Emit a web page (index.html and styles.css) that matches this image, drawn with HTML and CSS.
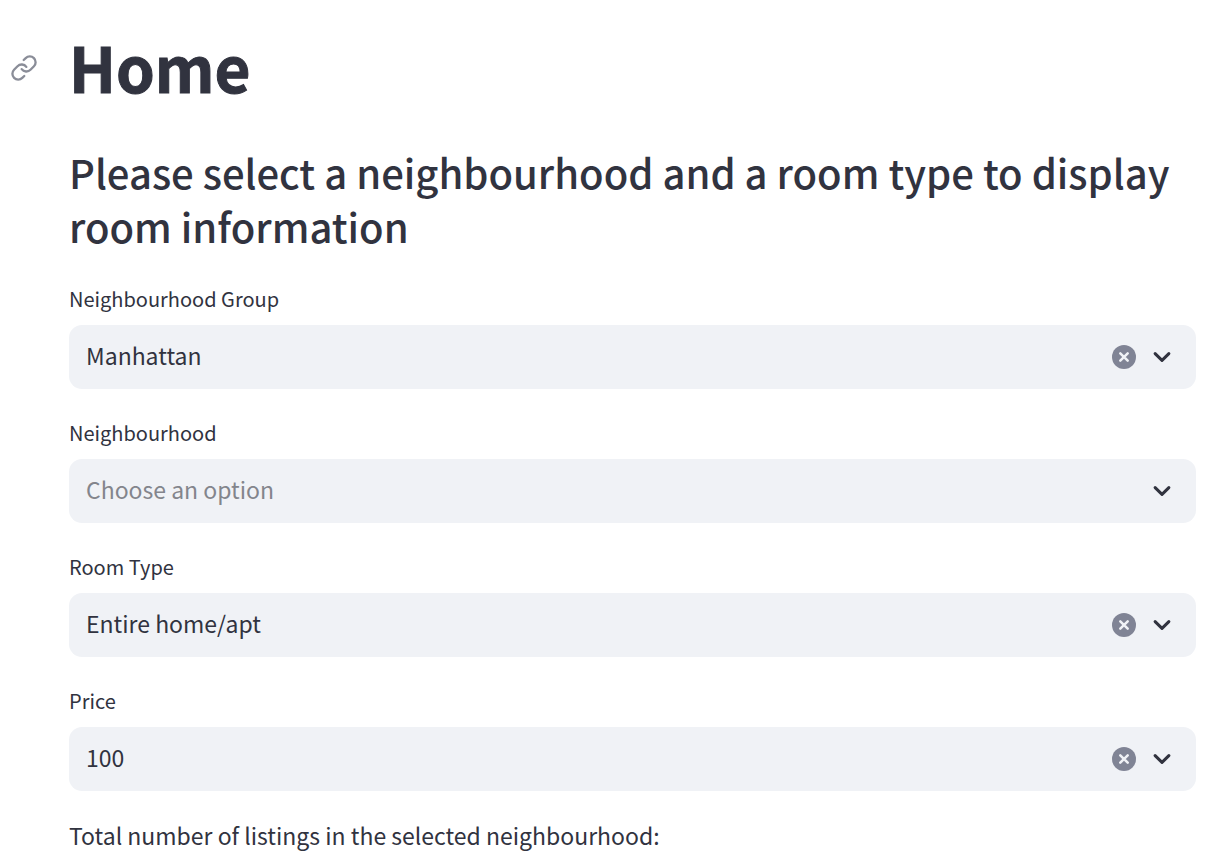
FILE: index.html
```html
<!DOCTYPE html>
<html lang="en">
<head>
<meta charset="utf-8">
<meta name="viewport" content="width=device-width, initial-scale=1">
<title>Home</title>
<link rel="stylesheet" href="styles.css">
</head>
<body>
<svg class="sprite" aria-hidden="true">
  <symbol id="chevron" viewBox="0 0 8 8"><path d="M1.5 2.75 4 5.25 6.5 2.75"/></symbol>
  <symbol id="clear" viewBox="0 0 24 24"><circle cx="12" cy="12" r="12"/><path d="m8.3 8.3 7.4 7.4m0-7.4-7.4 7.4"/></symbol>
</svg>
<main class="page">
  <header class="title-row">
    <a class="anchor" href="#home" aria-label="Link to heading">
      <svg class="link-icon" viewBox="0 0 24 24" aria-hidden="true"><path d="M10 13a5 5 0 0 0 7.54.54l3-3a5 5 0 0 0-7.07-7.07l-1.72 1.71"/><path d="M14 11a5 5 0 0 0-7.54-.54l-3 3a5 5 0 0 0 7.07 7.07l1.71-1.71"/></svg>
    </a>
    <h1 class="title" id="home">Home</h1>
  </header>
  <div class="content">
    <h3 class="subtitle">Please select a neighbourhood and a room type to display room information</h3>
    <form class="fields">
      <div class="field">
        <label class="label" for="group">Neighbourhood Group</label>
        <div class="control">
          <select class="select" id="group"><option>Manhattan</option></select>
          <div class="tools">
            <button class="clear" type="button" aria-label="Clear neighbourhood group"><svg class="clear-icon"><use href="#clear"/></svg></button>
            <svg class="chevron" aria-hidden="true"><use href="#chevron"/></svg>
          </div>
        </div>
      </div>
      <div class="field">
        <label class="label" for="hood">Neighbourhood</label>
        <div class="control">
          <select class="select select-empty" id="hood"><option value="">Choose an option</option></select>
          <div class="tools">
            <svg class="chevron" aria-hidden="true"><use href="#chevron"/></svg>
          </div>
        </div>
      </div>
      <div class="field">
        <label class="label" for="room">Room Type</label>
        <div class="control">
          <select class="select" id="room"><option>Entire home/apt</option></select>
          <div class="tools">
            <button class="clear" type="button" aria-label="Clear room type"><svg class="clear-icon"><use href="#clear"/></svg></button>
            <svg class="chevron" aria-hidden="true"><use href="#chevron"/></svg>
          </div>
        </div>
      </div>
      <div class="field">
        <label class="label" for="price">Price</label>
        <div class="control">
          <select class="select" id="price"><option>100</option></select>
          <div class="tools">
            <button class="clear" type="button" aria-label="Clear price"><svg class="clear-icon"><use href="#clear"/></svg></button>
            <svg class="chevron" aria-hidden="true"><use href="#chevron"/></svg>
          </div>
        </div>
      </div>
    </form>
    <p class="summary">Total number of listings in the selected neighbourhood:</p>
  </div>
</main>
</body>
</html>
```
FILE: styles.css
```css
* { box-sizing: border-box; }
body {
  margin: 0;
  background: #fff;
  color: #31333f;
  font-family: "Source Sans Pro", "Noto Sans CJK SC", sans-serif;
  font-size: 23px;
}
.sprite { position: absolute; width: 0; height: 0; }
.page { padding: 28px 28px 8px 10px; }
.title-row { display: flex; align-items: center; gap: 31px; }
.anchor { display: flex; color: #8a8d98; }
.link-icon {
  width: 28px;
  height: 28px;
  fill: none;
  stroke: currentColor;
  stroke-width: 2;
  stroke-linecap: round;
  stroke-linejoin: round;
}
.title {
  margin: 0;
  padding-bottom: 4px;
  font-size: 62px;
  font-weight: 700;
  line-height: 76px;
  -webkit-text-stroke: 1px currentColor;
}
.content { padding-left: 59px; }
.subtitle { margin: 37px 0 28px; font-size: 40px; font-weight: 500; line-height: 54px; }
.fields { display: grid; gap: 26px; }
.field { display: grid; gap: 8px; }
.label { font-size: 20px; line-height: 36px; }
.control { display: grid; align-items: center; }
.control > * { grid-area: 1 / 1; }
.select {
  appearance: none;
  width: 100%;
  height: 64px;
  padding: 0 120px 4px 17px;
  border: 0;
  border-radius: 13px;
  background: #f0f2f6;
  color: inherit;
  font: inherit;
}
.select-empty { color: #83858c; }
.tools {
  display: flex;
  justify-self: end;
  align-items: center;
  gap: 15px;
  padding-right: 23px;
  pointer-events: none;
}
.clear {
  display: flex;
  padding: 0;
  border: 0;
  background: none;
  pointer-events: auto;
  cursor: pointer;
}
.clear-icon { width: 24px; height: 24px; fill: #808495; stroke: none; }
#clear path { stroke: #f0f2f6; stroke-width: 2.5; stroke-linecap: round; }
.chevron {
  width: 22px;
  height: 22px;
  fill: none;
  stroke: #31333f;
  stroke-width: 1.1;
  stroke-linecap: round;
  stroke-linejoin: round;
}
.summary { margin: 24px 0 0; line-height: 40px; }
```
